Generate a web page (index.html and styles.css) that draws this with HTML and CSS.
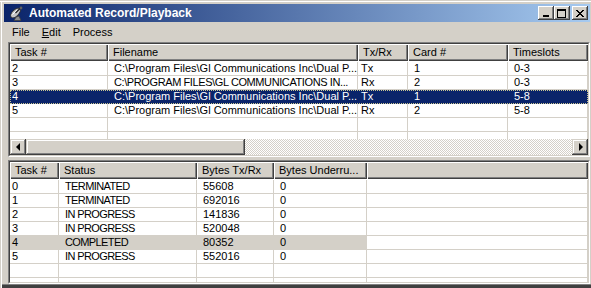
FILE: index.html
```html
<!DOCTYPE html>
<html>
<head>
<meta charset="utf-8">
<link rel="stylesheet" href="styles.css">
</head>
<body>
<div class="window">
  <div class="titlebar">
    <svg class="app-icon" width="15" height="15" viewBox="0 0 15 15">
      <ellipse cx="6.5" cy="7" rx="6" ry="3.2" transform="rotate(-45 6.5 7)" fill="#c8c8c8" stroke="#303030" stroke-width="1"/>
      <path d="M3.5 8.5 L8 4" stroke="#fff" stroke-width="1"/>
      <path d="M6.5 7 L11.5 2" stroke="#202020" stroke-width="1.2"/>
      <circle cx="12" cy="2" r="1.4" fill="#606060"/>
      <path d="M7 11 L5 14.5 L12 14.5 L10 10 Z" fill="#8a8a8a" stroke="#404040" stroke-width="0.8"/>
    </svg>
    <span class="title">Automated Record/Playback</span>
    <div class="caption-buttons">
      <div class="cbtn"><span class="g-min"></span></div>
      <div class="cbtn"><span class="g-max"></span></div>
      <div class="cbtn gap">
        <svg width="8" height="7" viewBox="0 0 8 7"><path d="M0 0h2v1h-2zM6 0h2v1h-2zM1 1h2v1h-2zM5 1h2v1h-2zM2 2h4v1h-4zM3 3h2v1h-2zM2 4h4v1h-4zM1 5h2v1h-2zM5 5h2v1h-2zM0 6h2v1h-2zM6 6h2v1h-2z" fill="#000"/></svg>
      </div>
    </div>
  </div>
  <div class="menubar">
    <span class="menu">File</span>
    <span class="menu"><u>E</u>dit</span>
    <span class="menu">Process</span>
  </div>

  <div class="listview lv-top">
    <div class="lv-client">
      <div class="hdr cols-top">
        <div class="hd">Task #</div>
        <div class="hd">Filename</div>
        <div class="hd">Tx/Rx</div>
        <div class="hd">Card #</div>
        <div class="hd">Timeslots</div>
      </div>
      <div class="rows">
        <div class="row cols-top"><div class="c first">2</div><div class="c">C:\Program Files\Gl Communications Inc\Dual P...</div><div class="c narrow">Tx</div><div class="c">1</div><div class="c">0-3</div></div>
        <div class="row cols-top"><div class="c first">3</div><div class="c capsfile">C:\PROGRAM FILES\GL COMMUNICATIONS IN...</div><div class="c narrow">Rx</div><div class="c">2</div><div class="c">0-3</div></div>
        <div class="row cols-top selected"><div class="c first">4</div><div class="c">C:\Program Files\Gl Communications Inc\Dual P...</div><div class="c narrow">Tx</div><div class="c">1</div><div class="c">5-8</div></div>
        <div class="row cols-top"><div class="c first">5</div><div class="c">C:\Program Files\Gl Communications Inc\Dual P...</div><div class="c narrow">Rx</div><div class="c">2</div><div class="c">5-8</div></div>
        <div class="row cols-top"><div class="c"></div><div class="c"></div><div class="c"></div><div class="c"></div><div class="c"></div></div>
        <div class="row cols-top"><div class="c"></div><div class="c"></div><div class="c"></div><div class="c"></div><div class="c"></div></div>
      </div>
      <div class="hscroll">
        <div class="sbtn"><span class="arr-left"></span></div>
        <div class="thumb"></div>
        <div class="track"></div>
        <div class="sbtn"><span class="arr-right"></span></div>
      </div>
    </div>
  </div>

  <div class="splitter"></div>

  <div class="listview lv-bottom">
    <div class="lv-client">
      <div class="hdr cols-bot">
        <div class="hd">Task #</div>
        <div class="hd">Status</div>
        <div class="hd">Bytes Tx/Rx</div>
        <div class="hd">Bytes Underru...</div>
        <div class="hd filler"></div>
      </div>
      <div class="rows">
        <div class="row cols-bot"><div class="c first">0</div><div class="c caps">TERMINATED</div><div class="c">55608</div><div class="c">0</div><div class="c"></div></div>
        <div class="row cols-bot"><div class="c first">1</div><div class="c caps">TERMINATED</div><div class="c">692016</div><div class="c">0</div><div class="c"></div></div>
        <div class="row cols-bot"><div class="c first">2</div><div class="c caps">IN PROGRESS</div><div class="c">141836</div><div class="c">0</div><div class="c"></div></div>
        <div class="row cols-bot"><div class="c first">3</div><div class="c caps">IN PROGRESS</div><div class="c">520048</div><div class="c">0</div><div class="c"></div></div>
        <div class="row cols-bot inactive-sel"><div class="c first">4</div><div class="c caps">COMPLETED</div><div class="c">80352</div><div class="c">0</div><div class="c"></div></div>
        <div class="row cols-bot"><div class="c first">5</div><div class="c caps">IN PROGRESS</div><div class="c">552016</div><div class="c">0</div><div class="c"></div></div>
        <div class="row cols-bot"><div class="c"></div><div class="c"></div><div class="c"></div><div class="c"></div><div class="c"></div></div>
        <div class="row cols-bot"><div class="c"></div><div class="c"></div><div class="c"></div><div class="c"></div><div class="c"></div></div>
      </div>
    </div>
  </div>
</div>
</body>
</html>
```

FILE: styles.css
```css
* { box-sizing: border-box; margin: 0; padding: 0; }
html, body { width: 591px; height: 288px; overflow: hidden; background: #d4d0c8; }
body { font-family: "Liberation Sans", Arial, sans-serif; font-size: 11px; color: #000; }

.window {
  width: 591px;
  height: 288px;
  background: #d4d0c8;
  display: flex;
  flex-direction: column;
  padding: 4px 1px 4px 4px;
  box-shadow: inset 0 1px #d4d0c8, inset 0 2px #fff, inset 1px 0 #d4d0c8, inset 2px 0 #fff,
              inset 0 -3px #404040, inset 0 -4px #808080;
}

/* title bar */
.titlebar {
  height: 18px;
  flex: none;
  display: flex;
  align-items: center;
  background: linear-gradient(to right, #0a246a, #a6caf0);
  padding-left: 2px;
}
.app-icon { margin: 0 5px 0 3px; flex: none; }
.title { color: #fff; font-weight: bold; font-size: 12px; white-space: nowrap; }
.caption-buttons { margin-left: auto; display: flex; padding-right: 2px; }
.cbtn {
  width: 16px; height: 14px;
  background: #d4d0c8;
  box-shadow: inset -1px -1px #404040, inset 1px 1px #fff, inset -2px -2px #808080, inset 2px 2px #d4d0c8;
  display: flex; align-items: center; justify-content: center;
}
.cbtn.gap { margin-left: 2px; }
.g-min { width: 6px; height: 2px; background: #000; margin-top: 5px; margin-left: -1px; }
.g-max { width: 9px; height: 9px; border: 1px solid #000; border-top-width: 2px; margin-left: -1px; }
.cbtn svg { margin-left: -1px; }

/* menu */
.menubar {
  height: 20px; flex: none;
  display: flex; align-items: center;
  padding-left: 2px;
}
.menu { padding: 0 6px; }
.menu u { text-decoration: underline; text-underline-offset: 1px; }

/* list views */
.listview {
  margin-left: 4px;
  width: 582px;
  border: 1px solid;
  border-color: #808080 #fff #fff #808080;
  background: #fff;
  flex: none;
}
.lv-client {
  border: 1px solid;
  border-color: #404040 #d4d0c8 #d4d0c8 #404040;
  height: 100%;
  display: flex;
  flex-direction: column;
  overflow: hidden;
}
.lv-top { height: 115px; }
.splitter { height: 3px; flex: none; }
.lv-bottom { height: 124px; }

.cols-top { display: grid; grid-template-columns: 98px 250px 50px 100px 80px; }
.cols-bot { display: grid; grid-template-columns: 49px 138px 77px 93px 221px; }

.hdr { height: 17px; flex: none; background: #d4d0c8; margin-bottom: 1px; }
.hd {
  background: #d4d0c8;
  box-shadow: inset 1px 1px #fff, inset -1px -1px #404040, inset -2px -2px #808080;
  padding: 2px 0 0 5px;
  line-height: 13px;
  white-space: nowrap;
  overflow: hidden;
}
.hd.filler { padding: 0; }

.rows { flex: 1; overflow: hidden; }
.row { height: 14px; }
.c {
  border-right: 1px solid #d4d0c8;
  border-bottom: 1px solid #d4d0c8;
  line-height: 13px;
  padding-left: 6px;
  white-space: nowrap;
  overflow: hidden;
}
.c.first { padding-left: 2px; }
.c.narrow { padding-left: 3px; }
.caps { letter-spacing: -0.6px; }
.capsfile { letter-spacing: -0.4px; }
.row.selected { background: #0a246a; color: #fff; outline: 1px dotted #c8c490; outline-offset: -1px; }
.row.selected .c { border-color: #0a246a; }
.row.inactive-sel .c:not(:last-child) { background: #d4d0c8; }

/* horizontal scroll bar */
.hscroll { height: 16px; flex: none; display: flex; }
.sbtn, .thumb {
  background: #d4d0c8;
  box-shadow: inset -1px -1px #404040, inset 1px 1px #d4d0c8, inset -2px -2px #808080, inset 2px 2px #fff;
}
.sbtn { width: 16px; display: flex; align-items: center; justify-content: center; }
.thumb { width: 219px; }
.track {
  flex: 1;
  background: repeating-conic-gradient(#fff 0 25%, #d4d0c8 0 50%) 0 0 / 2px 2px;
}
.arr-left { width: 0; height: 0; border-top: 4px solid transparent; border-bottom: 4px solid transparent; border-right: 4px solid #000; margin-left: -1px; }
.arr-right { width: 0; height: 0; border-top: 4px solid transparent; border-bottom: 4px solid transparent; border-left: 4px solid #000; margin-left: 1px; }
```
